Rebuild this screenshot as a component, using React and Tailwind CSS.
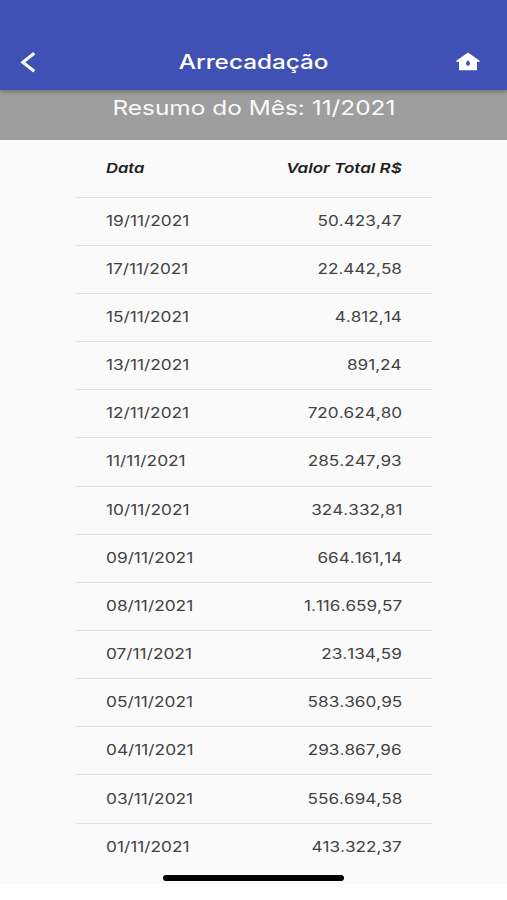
const rows = [
  ["19/11/2021", "50.423,47"],
  ["17/11/2021", "22.442,58"],
  ["15/11/2021", "4.812,14"],
  ["13/11/2021", "891,24"],
  ["12/11/2021", "720.624,80"],
  ["11/11/2021", "285.247,93"],
  ["10/11/2021", "324.332,81"],
  ["09/11/2021", "664.161,14"],
  ["08/11/2021", "1.116.659,57"],
  ["07/11/2021", "23.134,59"],
  ["05/11/2021", "583.360,95"],
  ["04/11/2021", "293.867,96"],
  ["03/11/2021", "556.694,58"],
  ["01/11/2021", "413.322,37"],
];

function Header() {
  return (
    <header className="relative z-10 flex h-[90px] shrink-0 items-end justify-between bg-[#3f51b5] px-[20px] shadow-[0_1px_5px_rgba(0,0,0,0.4)]">
      <button aria-label="Voltar" className="mb-[17px]">
        <svg width="16" height="22" viewBox="0 0 16 22" fill="none" stroke="white" strokeWidth="3">
          <path d="M14.2 2.2 2.8 11.2 14.2 20.2" />
        </svg>
      </button>
      <h1 className="mb-[14px] ml-[16px] origin-center scale-x-[1.215] text-[20px] leading-[28px] font-medium text-white">
        Arrecadação
      </h1>
      <button aria-label="Início" className="mr-[7px] mb-[19px]">
        <svg width="24" height="19" viewBox="0 0 24 19" fill="white">
          <path fillRule="evenodd" d="M12 0.5 0.3 8.8V9.8H3V18.3H21V9.8H23.7V8.8ZM12 8C11 9.3 10 10.3 10 11.6a2 2.2 0 0 0 4 0C14 10.3 13 9.3 12 8Z" />
        </svg>
      </button>
    </header>
  );
}

export default function App() {
  return (
    <div className="h-[900px] overflow-hidden bg-white font-['Inter','Liberation_Sans',sans-serif]">
      <div className="relative flex h-[884px] flex-col bg-[#fafafa]">
        <Header />
        <div className="flex h-[50px] shrink-0 justify-center bg-[#9e9e9e] pt-[4px]">
          <h2 className="origin-center scale-x-[1.22] text-[20px] leading-[28px] whitespace-nowrap text-[#fafafa]">
            Resumo do Mês: 11/2021
          </h2>
        </div>
        <main className="ml-[76px] w-[356px]">
          <div className="flex h-[56.6px] items-center justify-between px-[30px] pb-px text-[13.5px] font-semibold text-[#212121] italic">
            <span className="origin-left scale-x-[1.23]">Data</span>
            <span className="origin-right scale-x-[1.26]">Valor Total R$</span>
          </div>
          {rows.map(([date, value]) => (
            <div
              key={date}
              className="flex h-[48.17px] items-center justify-between border-t border-[#e2e2e2] px-[30px] pb-[2px] text-[14px] text-[#424242]"
            >
              <span className="origin-left scale-x-[1.235]">{date}</span>
              <span className="origin-right scale-x-[1.225] [font-kerning:none]">{value}</span>
            </div>
          ))}
        </main>
        <div className="absolute top-[875px] left-[163px] h-[6px] w-[181px] rounded-full bg-black" />
      </div>
    </div>
  );
}
